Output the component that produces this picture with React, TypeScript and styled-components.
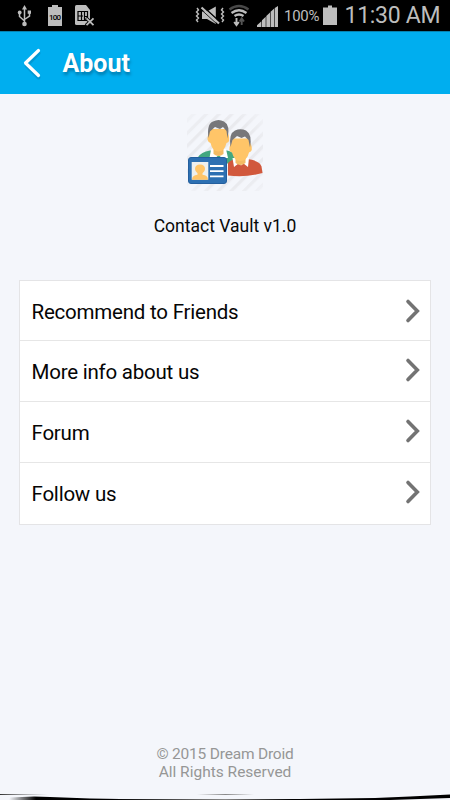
import React from 'react';
import styled, { createGlobalStyle } from 'styled-components';

const GlobalStyle = createGlobalStyle`
  * { box-sizing: border-box; }
  body { margin: 0; background: #f4f6fb; font-family: Roboto, "Noto Sans", sans-serif; }
`;

const Screen = styled.div`
  width: 450px;
  height: 800px;
  display: flex;
  flex-direction: column;
  background: #f4f6fb;
  overflow: hidden;
`;

const StatusBar = styled.div`
  flex: none;
  height: 31px;
  display: flex;
  align-items: center;
  justify-content: space-between;
  background: #000;
  color: #bdbdbd;
`;

const StatusGroup = styled.div`
  display: flex;
  align-items: center;
  height: 31px;
`;

const StatusIcon = styled.svg`
  display: block;
  flex: none;
`;

const BatteryPercent = styled.span`
  width: 38px;
  padding-top: 1px;
  font-size: 15px;
  letter-spacing: -0.3px;
  white-space: nowrap;
`;

const Clock = styled.span`
  width: 111px;
  padding-left: 5.5px;
  font-size: 23px;
  line-height: 31px;
  letter-spacing: -0.3px;
  white-space: nowrap;
`;

const Header = styled.header`
  flex: none;
  height: 63px;
  display: flex;
  align-items: center;
  gap: 14.5px;
  padding-left: 18px;
  background: #00aeef;
  border-top: 1px solid #0682b0;
`;

const BackButton = styled.button`
  width: 30px;
  height: 44px;
  padding: 0;
  border: 0;
  background: none;
`;

const Title = styled.h1`
  margin: 2px 0 0;
  color: #fff;
  font-size: 25px;
  line-height: 30px;
  font-weight: 700;
  text-shadow: 1px 3px 3px rgba(0, 55, 85, 0.4);
`;

const Body = styled.main`
  flex: 1;
  display: flex;
  flex-direction: column;
  align-items: center;
  padding: 18px 19px 0;
`;

const AppLogo = styled.svg`
  display: block;
  flex: none;
`;

const Version = styled.div`
  margin-top: 23px;
  font-size: 17.5px;
  line-height: 24px;
  color: #080808;
`;

const Menu = styled.nav`
  width: 412px;
  height: 245px;
  margin-top: 42px;
  display: grid;
  grid-template-rows: 60px 61px 61px 61px;
  background: #fff;
  border: 1px solid #e4e4e6;
`;

const MenuRow = styled.a`
  display: flex;
  align-items: center;
  justify-content: space-between;
  padding: 1px 9px 0 11.5px;
  color: #050505;
  font-size: 20.5px;
  letter-spacing: -0.22px;
  border-bottom: 1px solid #e6e6e6;
  &:first-child { padding-top: 3px; }
  &:last-child { border-bottom: 0; padding-top: 0; }
`;

const RowArrow = styled.svg`
  display: block;
  margin-top: -3px;
`;

const Footer = styled.footer`
  margin-top: auto;
  padding-bottom: 13px;
  text-align: center;
  color: #969696;
  font-size: 15.5px;
  line-height: 18px;
`;

const FooterLine = styled.div<{ $spacing: number }>`
  letter-spacing: ${(p) => p.$spacing}px;
`;

const BottomEdge = styled.svg`
  display: block;
  flex: none;
`;

const UsbIcon = () => (
  <StatusIcon width="48" height="31" viewBox="0 0 48 31" fill="none" stroke="#bdbdbd" strokeWidth="1.5">
    <path d="M24.5 8v15M19.5 13v3.5l5 4.5M29.5 13v3l-5 3.5" />
    <path d="M24.5 5l2.500 4.500h-5z" fill="#bdbdbd" stroke="none" />
    <circle cx="19.700" cy="12.500" r="1.900" fill="#bdbdbd" stroke="none" />
    <path d="M27.700 10.500h3.300v3.300h-3.300z" fill="#bdbdbd" stroke="none" />
    <circle cx="24.500" cy="24" r="2.300" fill="#bdbdbd" stroke="none" />
  </StatusIcon>
);

const FullBatteryIcon = () => (
  <StatusIcon width="27" height="31" viewBox="48 0 27 31">
    <path d="M48 7h4V5h6v2h4v19H48z" fill="#bdbdbd" />
    <text x="55" y="19.600" fontSize="8" textAnchor="middle" textLength="12" fontFamily="Roboto, sans-serif" fontWeight="500">100</text>
  </StatusIcon>
);

const SimIcon = () => (
  <StatusIcon width="21" height="31" viewBox="75 0 21 31" fill="none">
    <path d="M75 6.500q0-1.500 1.500-1.500H86l4 5v11l-3 4H76.500q-1.500 0-1.500-1.500z" fill="#bdbdbd" />
    <path d="M78 11.500h9.500v9H78zM78 16h5M81.500 11.500v9M84.500 11.500v5h3M84.500 16v4.500" stroke="#000" strokeWidth="1.200" />
    <path d="M86 18l8 7.500M94 18l-8 7.500" stroke="#000" strokeWidth="3.500" />
    <path d="M86.500 18.300l7 6.800M93.500 18.300l-7 6.800" stroke="#bdbdbd" strokeWidth="1.800" />
  </StatusIcon>
);

const MutedIcon = () => (
  <StatusIcon width="33" height="31" viewBox="195 0 33 31" fill="none">
    <path d="M202 11.500h5l8.800-5v17.500l-8.800-5h-5z" fill="#bdbdbd" />
    <path d="M203 6.500l17 15.500" stroke="#000" strokeWidth="1.600" />
    <path d="M201.500 7.500l17.500 16" stroke="#bdbdbd" strokeWidth="2.200" />
    <path d="M200 8.500l17.500 16" stroke="#000" strokeWidth=".8" />
    <path d="M197 8l1.500 2-2 2 2 2-2 2 2 2-2 2 1.500 2M223 8l-1.500 2 2 2-2 2 2 2-2 2 2 2-1.500 2" stroke="#bdbdbd" strokeWidth="1.400" />
  </StatusIcon>
);

const WifiIcon = () => (
  <StatusIcon width="29" height="31" viewBox="228 0 29 31" fill="none">
    <path d="M229.500 9.500q9.500-7 19 0" stroke="#484848" strokeWidth="2.400" />
    <path d="M231.500 13q7.500-5.500 15 0M234.500 16q4.500-3 9 0" stroke="#bdbdbd" strokeWidth="2.300" />
    <path d="M236.500 18v7M234.200 22l2.300 3.200 2.300-3.200" stroke="#bdbdbd" strokeWidth="1.900" />
    <path d="M241.700 25v-6M239.500 21.500l2.200-3.200 2.300 3.200" stroke="#555" strokeWidth="1.900" />
  </StatusIcon>
);

const SignalIcon = () => (
  <StatusIcon width="27" height="31" viewBox="257 0 27 31" fill="#bdbdbd">
    <path d="M257 27v-1.800l4.400-4V27zM262 27v-6.800l3.700-3.400V27zM266.300 27V16l3.700-3.500V27zM270.600 27v-15.200l3.600-3.400V27zM274.800 27V8l3.200-2V27z" />
  </StatusIcon>
);

const BatteryIcon = () => (
  <StatusIcon width="17" height="31" viewBox="322 0 17 31">
    <path d="M323 7.500h5v-2h4v2h5V25h-14z" fill="#bdbdbd" />
  </StatusIcon>
);

const ContactsLogo = () => (
  <AppLogo width="76" height="79" viewBox="187 112 76 79">
    <defs>
      <pattern id="stripes" width="9" height="9" patternUnits="userSpaceOnUse" patternTransform="rotate(45)">
        <rect width="3.200" height="9" fill="#e9eaee" />
      </pattern>
      <radialGradient id="fade">
        <stop offset=".65" stopColor="#fff" />
        <stop offset="1" stopColor="#fff" stopOpacity=".25" />
      </radialGradient>
      <mask id="soft" maskUnits="userSpaceOnUse" x="187" y="112" width="76" height="79">
        <ellipse cx="225.500" cy="153" rx="54" ry="54" fill="url(#fade)" />
      </mask>
    </defs>
    <rect x="187" y="114" width="76" height="77" fill="url(#stripes)" mask="url(#soft)" />
    <path d="M197.700 157.500Q201 152 210 150.500h17q8 1 8 8l-5 5h-28z" fill="#43a780" />
    <path d="M211 149.500L209.500 158h6l3-3 3.500 3h6l-2-9z" fill="#fff" />
    <path d="M213.500 146h10v8q-5 4-10 0z" fill="#f3bb63" />
    <path d="M208.300 134Q206 142 210.500 143q2 8.500 8 8.500t8-8.500q4-1 2.200-8l-2-6h-16z" fill="#ffc568" />
    <path d="M208.500 138Q206.500 124 213 121.500 218.500 118.500 224 121.500 230.500 125 227.500 138.500L226.500 131 223 127 220 129 215 127 210 131.500z" fill="#77777a" />
    <path d="M228 175.500V163Q230 160 237 159h10q13 1.500 14.500 7.500l1 6.500Q245 178 228 175.500z" fill="#d1583c" />
    <path d="M232.500 158l1.500 9 4.500-3.500 2.500 2 2.500-2 4.500 3.500 1-9z" fill="#fff" />
    <path d="M235.500 154h10v9q-5 4-10 0z" fill="#f3bb63" />
    <path d="M230.500 144Q227.500 151 232 152.500q2 8.500 8.500 8.500t8.500-8.500q4.500-1.500 2-8l-3-6h-15z" fill="#ffc568" />
    <path d="M230.500 147Q228.500 133.500 235 130.500 240.500 128 246 130.500 252.500 134.500 250 147.500L248.500 140 245 136.500 241.500 138 237 136 232.500 140z" fill="#77777a" />
    <rect x="188.500" y="157.500" width="38" height="26" rx="2.500" fill="#2d70b2" stroke="#245f9e" />
    <path d="M191.700 162h16.600v17.700h-16.600z" fill="#eef0ee" />
    <path d="M192 179.700q0-4.500 5.500-5v-1.500q-2.500-1.500-2.500-4.200 0-4.500 5-4.500t5 4.500q0 2.700-2.500 4.200v1.500q5.500.5 5.500 5z" fill="#ffc568" />
    <path d="M210 166h13.500M210 171.200h13.500M210 176.300h13.500" stroke="#fff" strokeWidth="1.800" />
  </AppLogo>
);

const items = ['Recommend to Friends', 'More info about us', 'Forum', 'Follow us'];

export default function App() {
  return (
    <>
      <GlobalStyle />
      <Screen>
        <StatusBar>
          <StatusGroup><UsbIcon /><FullBatteryIcon /><SimIcon /></StatusGroup>
          <StatusGroup>
            <MutedIcon /><WifiIcon /><SignalIcon />
            <BatteryPercent>100%</BatteryPercent>
            <BatteryIcon />
            <Clock>11:30 AM</Clock>
          </StatusGroup>
        </StatusBar>
        <Header>
          <BackButton aria-label="Back">
            <svg width="30" height="44" viewBox="0 0 30 44" fill="none" strokeLinecap="round" strokeLinejoin="round">
              <path d="M20.500 12L8.500 24.500l12 12" stroke="#006b99" strokeOpacity=".3" strokeWidth="4" />
              <path d="M20.500 9.500L7.500 22l13 12.500" stroke="#fff" strokeWidth="3.200" />
            </svg>
          </BackButton>
          <Title>About</Title>
        </Header>
        <Body>
          <ContactsLogo />
          <Version>Contact Vault v1.0</Version>
          <Menu>
            {items.map((item) => (
              <MenuRow key={item}>
                {item}
                <RowArrow width="16" height="26" viewBox="0 0 16 26" fill="none">
                  <path d="M3 3.500l9.300 9.500L3 22.500" stroke="#737373" strokeWidth="3.600" strokeLinecap="round" />
                </RowArrow>
              </MenuRow>
            ))}
          </Menu>
          <Footer>
            <FooterLine $spacing={-0.2}>© 2015 Dream Droid</FooterLine>
            <FooterLine $spacing={0}>All Rights Reserved</FooterLine>
          </Footer>
        </Body>
        <BottomEdge width="450" height="6" viewBox="0 0 450 6">
          <defs>
            <linearGradient id="edge" x1="0" x2="450" gradientUnits="userSpaceOnUse">
              <stop offset=".02" stopColor="#000" stopOpacity="0" />
              <stop offset=".08" stopColor="#000" />
              <stop offset=".25" stopColor="#000" />
              <stop offset=".4" stopColor="#555" />
              <stop offset=".5" stopColor="#888" />
              <stop offset=".65" stopColor="#000" />
              <stop offset="1" stopColor="#000" />
            </linearGradient>
            <linearGradient id="fadeRight"><stop stopColor="#333" /><stop offset="1" stopColor="#777" stopOpacity="0" /></linearGradient>
            <linearGradient id="fadeBoth"><stop stopColor="#888" stopOpacity="0" /><stop offset=".5" stopColor="#888" /><stop offset="1" stopColor="#888" stopOpacity="0" /></linearGradient>
          </defs>
          <path d="M8 6L10 3.500 34 2.500 50 3 90 4.500 120 5H300L375 4 410 2.500 450 .5V4L420 5 390 6z" fill="url(#edge)" />
          <rect width="48" height="1" y="0" fill="url(#fadeRight)" />
          <rect x="197" width="57" height="1" fill="url(#fadeBoth)" />
        </BottomEdge>
      </Screen>
    </>
  );
}
